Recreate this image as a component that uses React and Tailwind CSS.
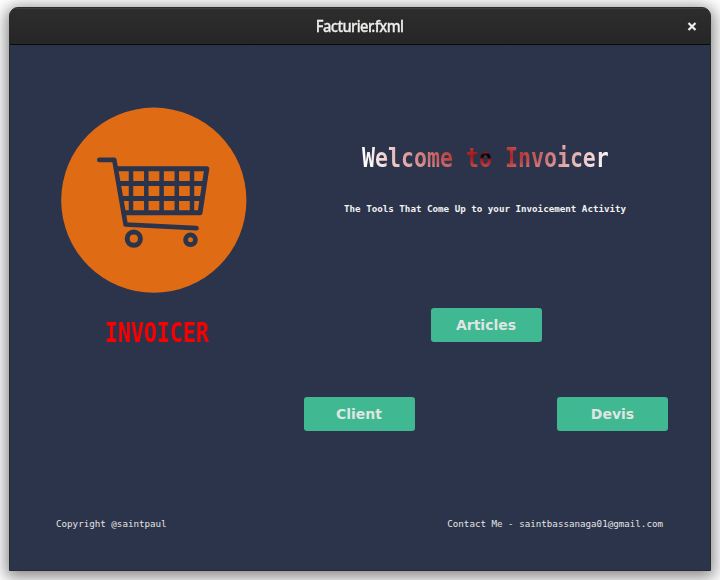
const buttonClass =
  "flex h-[34px] w-[111px] items-center justify-center rounded-[3px] bg-[#40b891] font-['DejaVu_Sans',sans-serif] text-[14px] font-bold leading-none text-[#dfe5e3]";

function CartLogo() {
  return (
    <svg width="186" height="186" viewBox="61 107 186 186" className="shrink-0">
      <circle cx="153.8" cy="200.2" r="92.6" fill="#df6b14" />
      <g fill="none" stroke="#2c344b" strokeLinecap="round" strokeLinejoin="round">
        <path d="M99.3 159.9H114.3L125.6 224.5L196.5 228.1" strokeWidth="4.6" />
        <path d="M116.5 168.7H206.8L200 212.8H124" strokeWidth="5" />
        <path d="M119 183.5H204M121 198.5H202" strokeWidth="4.8" strokeLinecap="butt" />
        <path d="M131 168V212M146.3 168V212M161.6 168V212M176.8 168V212M192 168V212" strokeWidth="4.5" strokeLinecap="butt" />
        <circle cx="133.8" cy="238.7" r="6.6" strokeWidth="5" />
        <circle cx="190.5" cy="239.8" r="4.9" strokeWidth="4.8" />
      </g>
    </svg>
  );
}

export default function App() {
  return (
    <div className="h-[580px] w-[720px] overflow-hidden bg-white px-[9px] pt-[7px]">
      <div className="flex h-[564px] w-[702px] flex-col overflow-hidden rounded-t-[9px] border border-[#2b2b2d] bg-[#2c344b] shadow-[0_3px_16px_3px_rgba(0,0,0,0.48)]">
        <header className="grid h-[37px] shrink-0 grid-cols-[1fr_auto_1fr] items-center border-b border-t border-b-[#080a0c] border-t-[#3d3d3d] bg-linear-to-b from-[#2d2d2d] to-[#262626]">
          <span />
          <h1 className="scale-x-[0.92] pb-px font-['Noto_Sans',sans-serif] text-[16px] font-medium leading-none tracking-[-0.65px] text-[#eeeeec] [-webkit-text-stroke:0.3px_#eeeeec]">Facturier.fxml</h1>
          <button aria-label="Close" className="mr-[13px] justify-self-end">
            <svg width="10" height="9" viewBox="0 0 10 9" stroke="#eeeeec" strokeWidth="2.2">
              <path d="M1.5 1L8.5 8M8.5 1L1.5 8" />
            </svg>
          </button>
        </header>
        <main className="grid h-[430px] shrink-0 grid-cols-[294px_364px] font-['DejaVu_Sans_Mono',monospace]">
          <section className="pl-[51px] pt-[62px]">
            <CartLogo />
            <h2 className="ml-[44px] mt-[25px] w-[104px] origin-left scale-x-[0.83] whitespace-nowrap text-[26px] font-bold leading-[30px] text-[#fb0000]">INVOICER</h2>
          </section>
          <section className="pt-[97px]">
            <h2 className="ml-[58px] w-[298px] origin-left scale-x-[0.83] whitespace-nowrap bg-[radial-gradient(ellipse_150px_32px_at_151px_14px,#000_0%,#1c0202_5%,#a51b1b_12%,#b02626_20%,#fff_100%)] bg-clip-text text-[26px] font-bold leading-[32px] text-transparent">Welcome to Invoicer</h2>
            <p className="ml-[40px] mt-[29px] whitespace-nowrap text-[9.2px] font-bold leading-[12px] text-[#f2f2f2]">The Tools That Come Up to your Invoicement Activity</p>
            <nav className="mt-[93px] flex flex-col gap-[55px]">
              <button className={`${buttonClass} ml-[127px] pr-px`}>Articles</button>
              <div className="flex justify-between">
                <button className={`${buttonClass} pr-px`}>Client</button>
                <button className={buttonClass}>Devis</button>
              </div>
            </nav>
          </section>
        </main>
        <footer className="flex justify-between pl-[46px] pr-[47px] pt-[43px] font-['DejaVu_Sans_Mono',monospace] text-[9.2px] leading-[12px] text-[#e4e4e4]">
          <span>Copyright @saintpaul</span>
          <span>Contact Me - saintbassanaga01@gmail.com</span>
        </footer>
      </div>
    </div>
  );
}
